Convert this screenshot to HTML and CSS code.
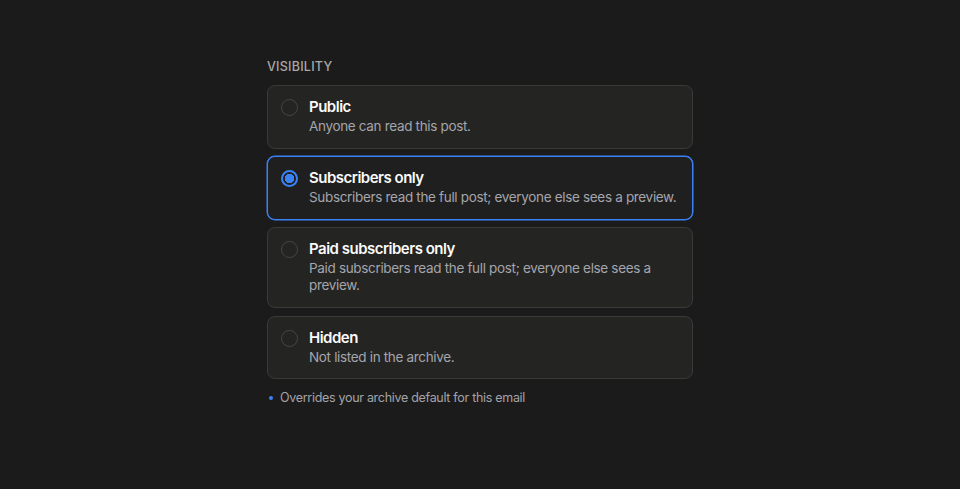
FILE: index.html
```html
<!DOCTYPE html>
<html lang="en">
<head>
<meta charset="utf-8">
<title>Visibility</title>
<link rel="stylesheet" href="styles.css">
</head>
<body>
<main class="page">
  <section class="field">
    <div class="label">Visibility</div>
    <div class="options" role="radiogroup">
      <label class="option">
        <span class="radio"></span>
        <span class="text">
          <span class="title">Public</span>
          <span class="desc">Anyone can read this post.</span>
        </span>
      </label>
      <label class="option selected">
        <span class="radio"></span>
        <span class="text">
          <span class="title">Subscribers only</span>
          <span class="desc">Subscribers read the full post; everyone else sees a preview.</span>
        </span>
      </label>
      <label class="option">
        <span class="radio"></span>
        <span class="text">
          <span class="title">Paid subscribers only</span>
          <span class="desc">Paid subscribers read the full post; everyone else sees a preview.</span>
        </span>
      </label>
      <label class="option">
        <span class="radio"></span>
        <span class="text">
          <span class="title">Hidden</span>
          <span class="desc">Not listed in the archive.</span>
        </span>
      </label>
    </div>
    <p class="note"><span class="dot"></span>Overrides your archive default for this email</p>
  </section>
</main>
</body>
</html>
```
FILE: styles.css
```css
html, body {
  margin: 0;
  padding: 0;
  background: #1b1b1b;
}
body {
  font-family: Inter, "Noto Sans", sans-serif;
  color: #f4f4f5;
  width: 960px;
  height: 489px;
  overflow: hidden;
}
.page {
  display: flex;
  justify-content: center;
  padding-top: 59px;
}
.field {
  width: 426px;
}
.label {
  font-size: 12.5px;
  font-weight: 500;
  letter-spacing: 0.25px;
  text-transform: uppercase;
  color: #a8a8a8;
  line-height: 16px;
  margin-bottom: 10px;
}
.options {
  display: flex;
  flex-direction: column;
  gap: 7.7px;
}
.option {
  display: flex;
  align-items: flex-start;
  gap: 11px;
  padding: 11px 10px 12.5px 13px;
  background: #242422;
  border: 1px solid #3a3a38;
  border-radius: 8px;
}
.option.selected {
  background: #1f1f1f;
  border-color: #3b82f6;
  box-shadow: 0 0 0 0.5px #3b82f6;
}
.radio {
  flex: none;
  box-sizing: border-box;
  width: 17px;
  height: 17px;
  margin-top: 2px;
  border-radius: 50%;
  border: 1.5px solid #464644;
}
.selected .radio {
  border: 2px solid #3b82f6;
  background: radial-gradient(circle, #3b82f6 0 4.5px, #1f1f1f 5px);
}
.text {
  display: flex;
  flex-direction: column;
}
.title {
  font-size: 15px;
  font-weight: 600;
  line-height: 20px;
  letter-spacing: -0.5px;
  color: #fafafa;
}
.desc {
  font-size: 13.5px;
  line-height: 17px;
  margin-top: 1px;
  letter-spacing: -0.33px;
  color: #a5a5ad;
}
.note {
  display: flex;
  align-items: center;
  gap: 7px;
  margin: 11px 0 0 2px;
  font-size: 12.5px;
  line-height: 16px;
  letter-spacing: -0.3px;
  color: #a3a3a8;
}
.dot {
  width: 4px;
  height: 4px;
  border-radius: 50%;
  background: #3b82f6;
}
```
